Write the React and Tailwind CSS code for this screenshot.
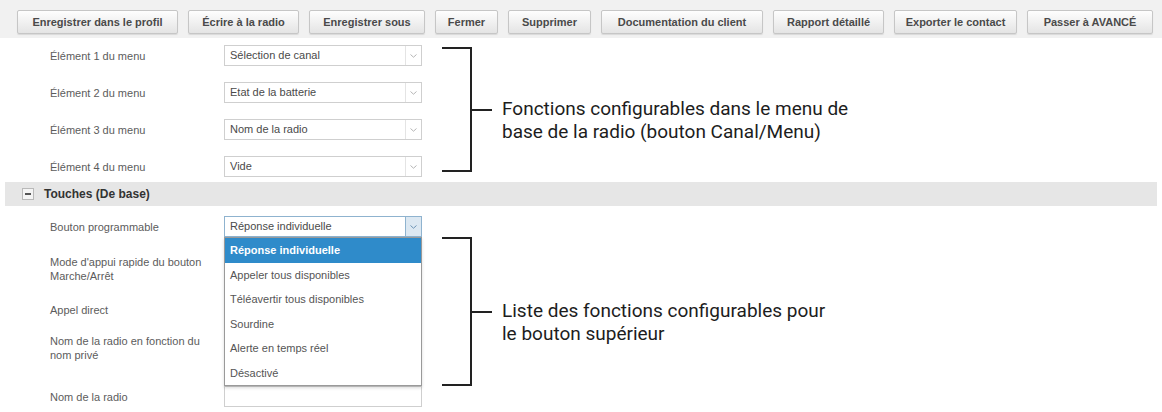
import React from "react";

const font = { fontFamily: '"Liberation Sans", Arial, sans-serif' };

/* ---------------- toolbar ---------------- */
const actions = [
    { label: "Enregistrer dans le profil", w: "w-[161px]" },
    { label: "Écrire à la radio", w: "w-[111px]" },
    { label: "Enregistrer sous", w: "w-[116px]" },
    { label: "Fermer", w: "w-[63px]" },
    { label: "Supprimer", w: "w-[83px]" },
    { label: "Documentation du client", w: "w-[162px]" },
    { label: "Rapport détaillé", w: "w-[111px]" },
    { label: "Exporter le contact", w: "w-[123px]" },
    { label: "Passer à AVANCÉ", w: "w-[126px]" },
];

function Toolbar() {
    return (
        <div className="h-[38px] bg-[#f1f1f1] flex items-start gap-[10px] pl-[17px] pt-[10px]">
            {actions.map((a) => (
                <button
                    key={a.label}
                    className={`${a.w} h-[24px] shrink-0 rounded-[2px] border border-[#c6c6c6] bg-gradient-to-b from-[#fefefe] to-[#e4e4e4] text-[11px] font-bold leading-none text-[#4a4a4a] shadow-[0_1px_1px_rgba(0,0,0,0.1)]`}
                >
                    {a.label}
                </button>
            ))}
        </div>
    );
}

/* ---------------- form bits ---------------- */
function Chevron() {
    return (
        <svg width="7" height="4" viewBox="0 0 7 4">
            <path d="M0.5 0.5 L3.5 3.2 L6.5 0.5" fill="none" stroke="currentColor" strokeWidth="1" />
        </svg>
    );
}

function Select({ value, active = false, children }) {
    return (
        <div className="relative w-[198px] h-[21px]">
            <div
                className={`h-full flex items-center bg-white border ${
                    active ? "border-[#8fb3cf]" : "border-[#cfcfcf]"
                }`}
            >
                <span className="flex-1 pl-[5px] text-[11px] text-[#4a4a4a] truncate">{value}</span>
                <span
                    className={`w-[16px] h-full flex items-center justify-center border-l ${
                        active
                            ? "border-[#8fb3cf] bg-[#dce8f2] text-[#6d94b5]"
                            : "border-[#e4e4e4] text-[#b5b5b5]"
                    }`}
                >
                    <Chevron />
                </span>
            </div>
            {children}
        </div>
    );
}

function Label({ children }) {
    return <div className="w-[174px] text-[11px] leading-[14px] text-[#5c5c5c]">{children}</div>;
}

// bracket + tick; the first text line sits about level with the tick
function Bracket({ h, children }) {
    return (
        <div className="flex items-center">
            <div className={`${h} w-[30px] border-y-2 border-r-2 border-[#222]`} />
            <div className="w-[20px] h-[2px] bg-[#222]" />
            <div
                className="ml-[10px] pt-[20px] text-[19px] leading-[23px] text-[#1d1d1d] whitespace-nowrap"
                style={{ fontFamily: 'Roboto, "Noto Sans", sans-serif' }}
            >
                {children}
            </div>
        </div>
    );
}

/* ---------------- dropdown ---------------- */
const options = [
    "Réponse individuelle",
    "Appeler tous disponibles",
    "Téléavertir tous disponibles",
    "Sourdine",
    "Alerte en temps réel",
    "Désactivé",
];

function OptionList() {
    return (
        <div className="absolute left-0 top-full z-10 w-[198px] h-[149px] bg-white border border-[#9a9a9a] shadow-[0_2px_3px_rgba(0,0,0,0.15)]">
            {options.map((o, i) => (
                <div
                    key={o}
                    className={`h-[24.6px] flex items-center pl-[5px] text-[11px] ${
                        i === 0 ? "bg-[#2f8bca] text-white font-bold" : "text-[#555]"
                    }`}
                >
                    {o}
                </div>
            ))}
        </div>
    );
}

/* ---------------- main page ---------------- */
export default function App() {
    const menuItems = [
        ["Élément 1 du menu", "Sélection de canal"],
        ["Élément 2 du menu", "Etat de la batterie"],
        ["Élément 3 du menu", "Nom de la radio"],
        ["Élément 4 du menu", "Vide"],
    ];

    return (
        <div className="w-[1162px] h-[412px] overflow-hidden bg-white" style={font}>
            <Toolbar />

            {/* menu section */}
            <div className="flex h-[144px]">
                <div className="w-[442px] shrink-0 pl-[50px] pt-[7px] flex flex-col gap-[16px]">
                    {menuItems.map(([label, value]) => (
                        <div key={label} className="flex items-center">
                            <Label>{label}</Label>
                            <Select value={value} />
                        </div>
                    ))}
                </div>
                <div className="mt-[9px] self-start h-[125px] flex items-center">
                    <Bracket h="h-[125px]">
                        Fonctions configurables dans le menu de
                        <br />
                        base de la radio (bouton Canal/Menu)
                    </Bracket>
                </div>
            </div>

            {/* section header */}
            <div className="mx-[5px] h-[24px] bg-[#e6e6e6] flex items-center pl-[17px] gap-[10px]">
                <span className="w-[12px] h-[12px] bg-[#f4f4f4] border border-[#b9b9b9] flex items-center justify-center">
                    <span className="w-[6px] h-[2px] bg-[#555]" />
                </span>
                <span className="text-[12px] font-bold text-[#333]">Touches (De base)</span>
            </div>

            {/* keys section */}
            <div className="flex">
                <div className="w-[442px] shrink-0 pl-[50px] pt-[10px] flex flex-col">
                    <div className="flex items-center h-[21px] relative z-10">
                        <Label>Bouton programmable</Label>
                        <Select value="Réponse individuelle" active>
                            <OptionList />
                        </Select>
                    </div>
                    <div className="flex items-center h-[42px] mt-[11px]">
                        <Label>
                            Mode d'appui rapide du bouton
                            <br />
                            Marche/Arrêt
                        </Label>
                        <Select value="" />
                    </div>
                    <div className="flex items-center h-[40px]">
                        <Label>Appel direct</Label>
                        <Select value="" />
                    </div>
                    <div className="flex items-center h-[36px]">
                        <Label>
                            Nom de la radio en fonction du
                            <br />
                            nom privé
                        </Label>
                        <Select value="" />
                    </div>
                    <div className="flex items-center h-[21px] mt-[20px]">
                        <Label>Nom de la radio</Label>
                        <div className="w-[198px] h-[21px] border border-[#cfcfcf] bg-white" />
                    </div>
                </div>
                <div className="mt-[31px] self-start">
                    <Bracket h="h-[149px]">
                        Liste des fonctions configurables pour
                        <br />
                        le bouton supérieur
                    </Bracket>
                </div>
            </div>
        </div>
    );
}
